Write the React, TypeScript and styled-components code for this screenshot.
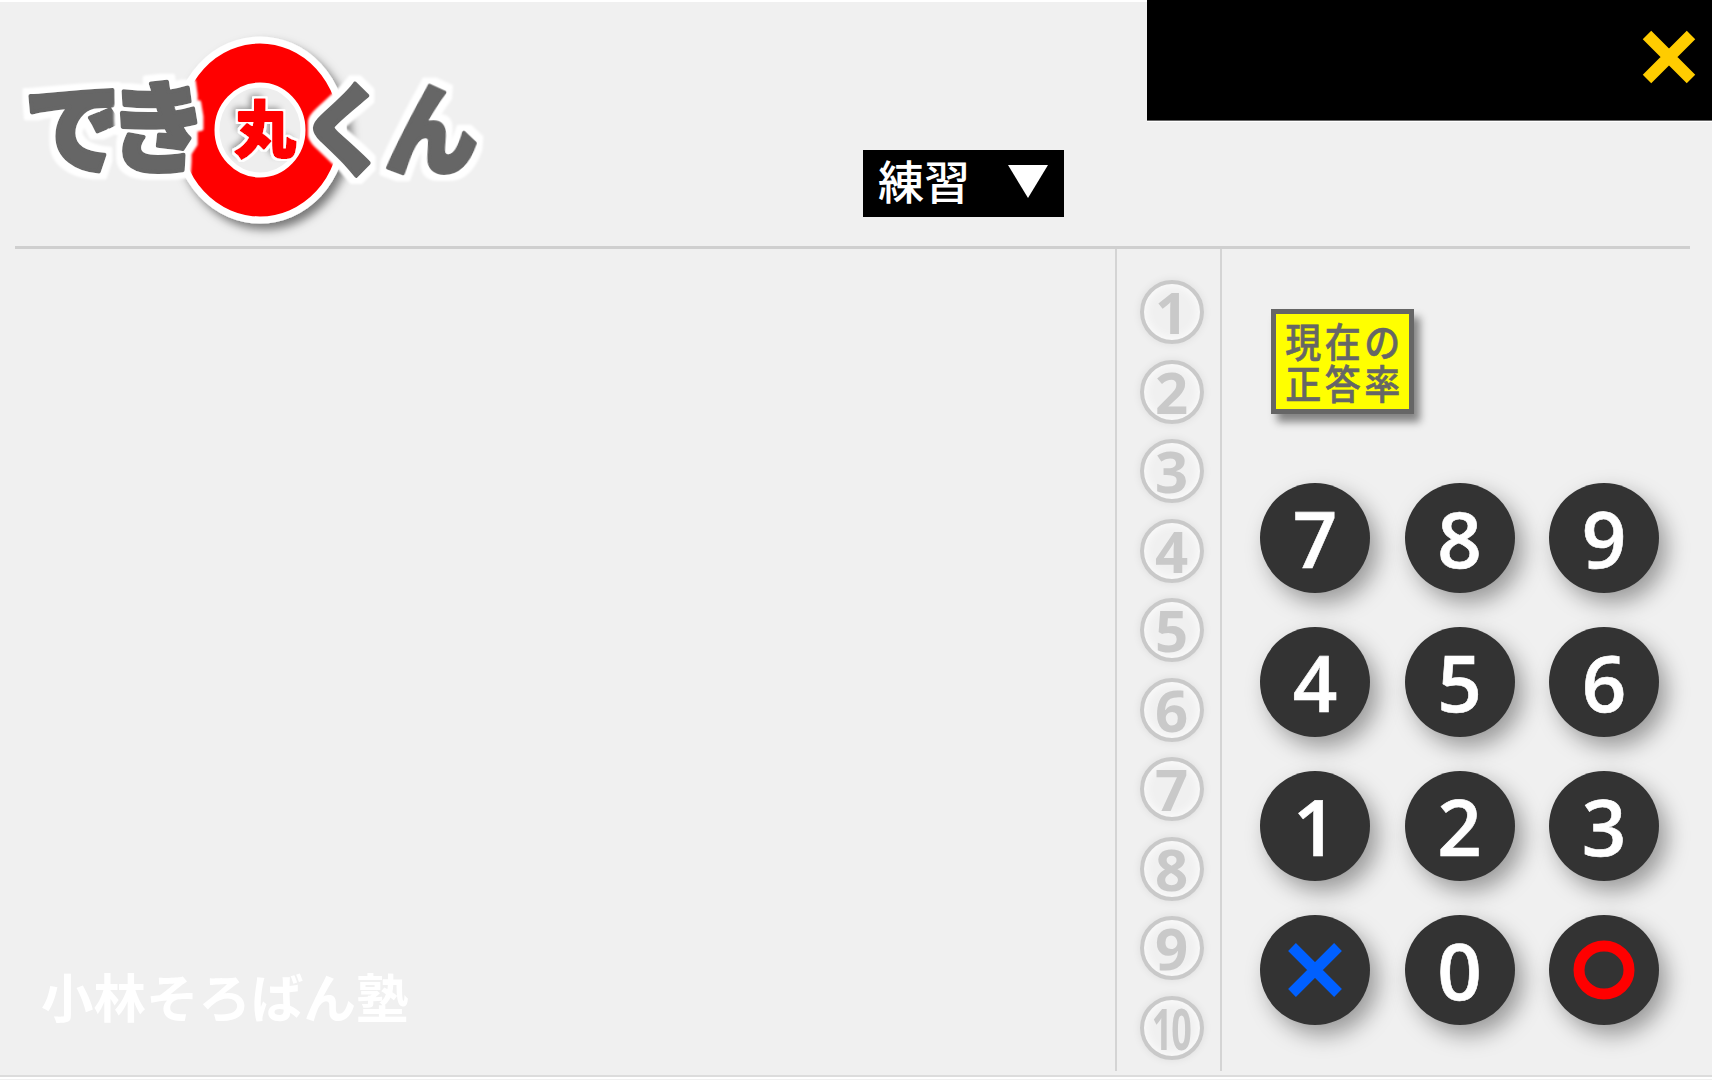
import React from 'react';
import styled, { createGlobalStyle } from 'styled-components';

const GlobalStyle = createGlobalStyle`
  html, body {
    margin: 0;
    padding: 0;
    background: #f0f0f0;
  }
`;

const jpFont = `"Noto Sans CJK JP", "Noto Sans", sans-serif`;

const Page = styled.div`
  width: 1712px;
  height: 1080px;
  overflow: hidden;
  display: flex;
  flex-direction: column;
  background: #f0f0f0;
  font-family: ${jpFont};
`;

const Header = styled.header`
  height: 246px;
  display: flex;
  flex: none;
  box-shadow: inset 0 2px 0 #fff;
`;

const LogoSvg = styled.svg`
  width: 500px;
  height: 246px;
  flex: none;
`;

const ModeSelect = styled.div`
  width: 201px;
  height: 67px;
  margin: 150px 0 0 363px;
  padding: 0 16px 0 15px;
  box-sizing: border-box;
  display: flex;
  align-items: center;
  justify-content: space-between;
  flex: none;
  background: #000;
  color: #fff;
  font-size: 46px;
  font-weight: 500;
  line-height: 1;
`;

const SelectLabel = styled.span`
  margin-bottom: 9px;
`;

const SelectArrow = styled.span`
  width: 40px;
  height: 33px;
  margin-bottom: 4px;
  background: #fff;
  clip-path: polygon(0 0, 100% 0, 50% 100%);
`;

const CloseBar = styled.div`
  width: 565px;
  height: 120px;
  margin-left: auto;
  padding: 30px 16px 0 0;
  box-sizing: border-box;
  display: flex;
  justify-content: flex-end;
  align-items: flex-start;
  background: #000;
  box-shadow: 0 1px 0 #666, 0 2px 0 #fff;
`;

const HeaderRule = styled.div`
  height: 3px;
  margin: 0 22px 0 15px;
  flex: none;
  background: #cfcfcf;
`;

const Body = styled.main`
  height: 822px;
  display: flex;
  flex: none;
`;

const WorkArea = styled.section`
  width: 1117px;
  padding: 0 0 44px 41px;
  box-sizing: border-box;
  display: flex;
  align-items: flex-end;
  flex: none;
  border-right: 2px solid #d4d4d4;
`;

const SchoolName = styled.div`
  color: #fff;
  font-size: 52.5px;
  font-weight: 700;
  line-height: 1.2;
  white-space: nowrap;
`;

const ProgressColumn = styled.div`
  width: 105px;
  padding: 31px 0 0 6px;
  box-sizing: border-box;
  display: flex;
  flex-direction: column;
  align-items: center;
  gap: 15.5px;
  flex: none;
  border-right: 2px solid #d4d4d4;
`;

const ProgressMark = styled.div`
  width: 64px;
  height: 64px;
  box-sizing: border-box;
  display: flex;
  align-items: center;
  justify-content: center;
  border: 4px solid #c9c9c9;
  border-radius: 50%;
  color: #c9c9c9;
  font-family: "Open Sans", sans-serif;
  font-size: 58px;
  font-weight: 700;
  line-height: 1;
  box-shadow: 0 0 9px rgba(0, 0, 0, 0.08), inset 0 0 12px #fff;
`;

const MarkLabel = styled.span<{ $narrow?: boolean }>`
  display: block;
  transform: ${p => (p.$narrow ? 'scaleX(0.62)' : 'none')};
  letter-spacing: ${p => (p.$narrow ? '-2px' : '0')};
`;

const SidePanel = styled.aside`
  flex: 1;
  padding: 60px 0 0 38px;
  display: flex;
  flex-direction: column;
`;

const RateBadge = styled.div`
  width: 143px;
  height: 105px;
  margin-left: 11px;
  box-sizing: border-box;
  display: flex;
  align-items: center;
  justify-content: center;
  background: #ff0;
  border: 5px solid #666;
  box-shadow: 6px 8px 8px rgba(0, 0, 0, 0.45);
`;

const RateLabel = styled.div`
  color: #666;
  font-size: 36px;
  font-weight: 500;
  -webkit-text-stroke: 0.5px #666;
  line-height: 37.5px;
  letter-spacing: 3.5px;
  white-space: nowrap;
  transform: translateX(2px) translateY(-1px) scaleY(1.12);
`;

const Keypad = styled.div`
  margin-top: 69px;
  display: grid;
  grid-template-columns: repeat(3, 110px);
  grid-auto-rows: 110px;
  column-gap: 34.5px;
  row-gap: 34px;
`;

const Key = styled.button`
  padding: 0;
  border: none;
  border-radius: 50%;
  display: flex;
  align-items: center;
  justify-content: center;
  background: #333;
  color: #fff;
  font-family: "Open Sans", sans-serif;
  font-size: 78px;
  font-weight: 600;
  line-height: 1;
  -webkit-text-stroke: 0.6px #fff;
  box-shadow: 8px 10px 22px rgba(0, 0, 0, 0.36);
`;

const FooterRule = styled.div`
  height: 2px;
  margin-top: 4px;
  flex: none;
  background: #dcdcdc;
  box-shadow: 0 2px 0 #fff;
`;

const CloseIcon = () => (
  <svg width="54" height="54" viewBox="0 0 54 54" aria-hidden="true">
    <path d="M5 5 L49 49 M49 5 L5 49" stroke="#fc0" strokeWidth="12" fill="none" />
  </svg>
);

const WrongIcon = () => (
  <svg width="54" height="54" viewBox="0 0 54 54" aria-hidden="true">
    <path d="M4 4 L50 50 M50 4 L4 50" stroke="#0060ff" strokeWidth="11" fill="none" />
  </svg>
);

const RightIcon = () => (
  <svg width="62" height="62" viewBox="0 0 62 62" aria-hidden="true">
    <ellipse cx="31" cy="31" rx="25" ry="24" stroke="#f00" strokeWidth="11" fill="none" />
  </svg>
);

const LogoGlyph = styled.text<{ $fill: string; $weight: number }>`
  font-family: ${jpFont};
  font-weight: 900;
  fill: ${p => p.$fill};
  stroke: ${p => p.$fill};
  stroke-width: ${p => p.$weight}px;
  stroke-linejoin: round;
`;

const Logo = () => (
  <LogoSvg viewBox="0 0 500 246" role="img" aria-label="でき丸くん">
    <defs>
      <filter id="logoShadow" x="-20%" y="-20%" width="150%" height="150%">
        <feDropShadow dx="5" dy="6" stdDeviation="5" floodColor="#000" floodOpacity="0.5" />
      </filter>
      <filter id="glyphEdge" x="-30%" y="-30%" width="160%" height="160%">
        <feMorphology in="SourceAlpha" operator="dilate" radius="6" result="grown" />
        <feGaussianBlur in="grown" stdDeviation="1" result="soft" />
        <feFlood floodColor="#fff" />
        <feComposite in2="soft" operator="in" result="edge" />
        <feMerge>
          <feMergeNode in="edge" />
          <feMergeNode in="SourceGraphic" />
        </feMerge>
      </filter>
      <filter id="markEdge" x="-30%" y="-30%" width="160%" height="160%">
        <feDropShadow in="SourceAlpha" dx="-4" dy="-3" stdDeviation="3" floodColor="#000" floodOpacity="0.4" result="shade" />
        <feMorphology in="SourceAlpha" operator="dilate" radius="2" result="grown" />
        <feFlood floodColor="#fff" />
        <feComposite in2="grown" operator="in" result="edge" />
        <feMerge>
          <feMergeNode in="shade" />
          <feMergeNode in="edge" />
          <feMergeNode in="SourceGraphic" />
        </feMerge>
      </filter>
    </defs>
    <ellipse cx="260" cy="130" rx="83" ry="90" fill="#f00" stroke="#fff" strokeWidth="7" filter="url(#logoShadow)" />
    <ellipse cx="260" cy="130" rx="43" ry="45" fill="#eeeeee" stroke="#fff" strokeWidth="5" />
    <LogoGlyph $fill="#666" $weight={4} transform="translate(24 166)" fontSize="100" filter="url(#glyphEdge)">で</LogoGlyph>
    <LogoGlyph $fill="#666" $weight={4} transform="translate(108 165)" fontSize="100" filter="url(#glyphEdge)">き</LogoGlyph>
    <LogoGlyph $fill="#f00" $weight={2} transform="translate(234 153)" fontSize="62" filter="url(#markEdge)">丸</LogoGlyph>
    <LogoGlyph $fill="#666" $weight={4} transform="translate(300 167) scale(0.9 1)" fontSize="100" filter="url(#glyphEdge)">く</LogoGlyph>
    <LogoGlyph $fill="#666" $weight={4} transform="translate(384 167) scale(0.92 1) skewX(-5)" fontSize="100" filter="url(#glyphEdge)">ん</LogoGlyph>
  </LogoSvg>
);

const keys: React.ReactNode[] = [
  '7', '8', '9',
  '4', '5', '6',
  '1', '2', '3',
  <WrongIcon key="wrong" />, '0', <RightIcon key="right" />,
];

const App: React.FC = () => {
  const marks = [1, 2, 3, 4, 5, 6, 7, 8, 9, 10];

  return (
    <Page>
      <GlobalStyle />
      <Header>
        <Logo />
        <ModeSelect>
          <SelectLabel>練習</SelectLabel>
          <SelectArrow />
        </ModeSelect>
        <CloseBar>
          <CloseIcon />
        </CloseBar>
      </Header>
      <HeaderRule />
      <Body>
        <WorkArea>
          <SchoolName>小林そろばん塾</SchoolName>
        </WorkArea>
        <ProgressColumn>
          {marks.map(n => (
            <ProgressMark key={n}>
              <MarkLabel $narrow={n === 10}>{n}</MarkLabel>
            </ProgressMark>
          ))}
        </ProgressColumn>
        <SidePanel>
          <RateBadge>
            <RateLabel>
              現在の
              <br />
              正答率
            </RateLabel>
          </RateBadge>
          <Keypad>
            {keys.map((k, i) => (
              <Key key={i}>{k}</Key>
            ))}
          </Keypad>
        </SidePanel>
      </Body>
      <FooterRule />
    </Page>
  );
};

export default App;
